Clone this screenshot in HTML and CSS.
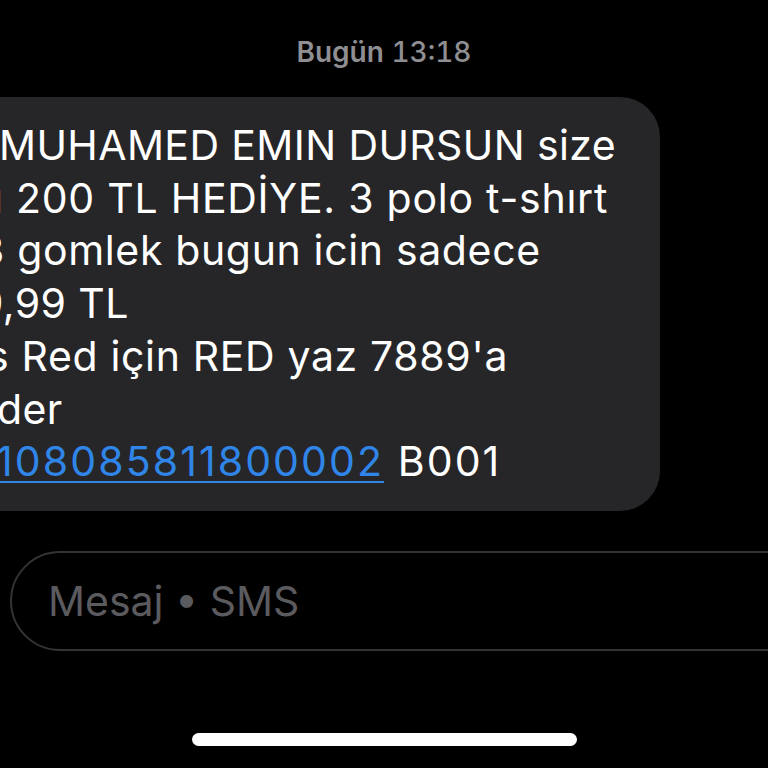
FILE: index.html
```html
<!DOCTYPE html>
<html lang="tr">
<head>
<meta charset="utf-8">
<link rel="stylesheet" href="styles.css">
</head>
<body>
<div class="screen">
  <div class="stamp"><span class="day">Bugün</span> 13:18</div>
  <div class="bubble">
    <div class="ln l1">MUHAMED EMIN DURSUN size</div>
    <div class="ln l2">ı 200 TL HEDİYE. 3 polo t-shırt</div>
    <div class="ln l3">3 gomlek bugun icin sadece</div>
    <div class="ln l4">9,99 TL</div>
    <div class="ln l5">s Red için RED yaz 7889'a</div>
    <div class="ln l6">der</div>
    <div class="ln l7"><a class="link" href="#">108085811800002</a> B001</div>
  </div>
  <div class="composer"><span class="placeholder">Mesaj • SMS</span></div>
  <div class="home"></div>
</div>
</body>
</html>
```
FILE: styles.css
```css
html, body {
  margin: 0;
  padding: 0;
  background: #000;
  width: 768px;
  height: 768px;
  overflow: hidden;
  font-family: Inter, "Noto Sans", sans-serif;
}
.screen {
  display: flex;
  flex-direction: column;
  width: 768px;
  height: 768px;
  overflow: hidden;
}
.stamp {
  margin-top: 36px;
  text-align: center;
  color: #8e8e93;
  font-size: 28px;
  line-height: 32px;
  font-weight: 500;
  font-variant-numeric: tabular-nums;
}
.day { font-weight: 600; }
.bubble {
  margin-top: 29px;
  margin-left: -140px;
  width: 800px;
  box-sizing: border-box;
  background: #262628;
  border-radius: 40px;
  padding: 22px 0 23px 140px;
  color: #fff;
  font-size: 41px;
  line-height: 52.7px;
  letter-spacing: 0.4px;
  overflow: hidden;
}
.ln { white-space: nowrap; }
.l1 { margin-left: -1px; }
.l2 { margin-left: -7px; letter-spacing: 0.75px; }
.l3 { margin-left: -21px; letter-spacing: 0.65px; }
.l4 { margin-left: -22px; }
.l5 { margin-left: -13px; letter-spacing: 0.65px; }
.l6 { margin-left: -3px; }
.l7 { margin-left: -4px; letter-spacing: 2.1px; }
.link {
  color: #2f86e8;
  text-decoration: underline;
  text-decoration-thickness: 2px;
  text-underline-offset: 5px;
}
.composer {
  margin-top: 40px;
  margin-left: 10px;
  width: 860px;
  height: 100px;
  box-sizing: border-box;
  border: 2px solid #333336;
  border-radius: 50px;
  display: flex;
  align-items: center;
  padding-left: 36px;
}
.placeholder {
  color: #5b5b5f;
  font-size: 41px;
}
.home {
  margin-top: 82px;
  align-self: center;
  width: 385px;
  height: 13px;
  border-radius: 7px;
  background: #fff;
}
```
